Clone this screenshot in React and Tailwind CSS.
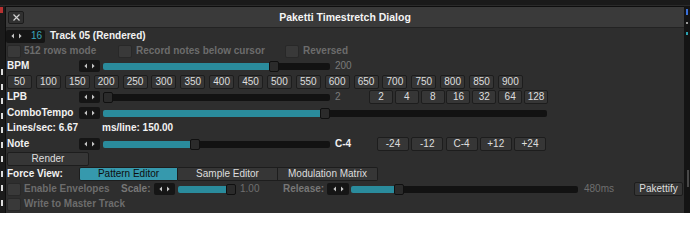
import React from 'react';

const Arrows = () => (
  <svg width="11" height="6" viewBox="0 0 11 6" className="block shrink-0">
    <path d="M3 0.4 L0.4 3 L3 5.6 Z" fill="#c6c6c6" />
    <path d="M8 0.4 L10.6 3 L8 5.6 Z" fill="#c6c6c6" />
  </svg>
);

function ValueBox({ className = 'w-[21px]' }) {
  return (
    <div className={`flex h-[12px] shrink-0 items-center justify-center rounded-[2px] bg-[#151515] ${className}`}>
      <Arrows />
    </div>
  );
}

function Slider({ w, fill }) {
  return (
    <div className={`flex h-[12px] shrink-0 items-center ${w}`}>
      <div className={`h-[7px] shrink-0 rounded-l-[2px] bg-[#2a8b9c] ${fill}`} />
      <div className="h-[11px] w-[10px] shrink-0 rounded-[2px] border border-[#101010] bg-[#2b2b2b]" />
      <div className="h-[7px] flex-1 rounded-r-[2px] bg-[#121212]" />
    </div>
  );
}

function Btn({ children, className = '' }) {
  return (
    <div
      className={`flex h-[14px] shrink-0 items-center justify-center rounded-[2px] border border-[#1d1d1d] bg-[#363636] text-[#dedede] ${className}`}
    >
      {children}
    </div>
  );
}

const Check = () => (
  <div className="h-[13px] w-[14px] shrink-0 rounded-[2px] border border-[#282828] bg-[#393939]" />
);

const bpms = [50, 100, 150, 200, 250, 300, 350, 400, 450, 500, 550, 600, 650, 700, 750, 800, 850, 900];
const lpbs = [2, 4, 8, 16, 32, 64, 128];
const notes = ['-24', '-12', 'C-4', '+12', '+24'];

function LeftStrip() {
  const marks = Array.from({ length: 10 });
  return (
    <div className="flex w-[5px] shrink-0 flex-col overflow-hidden bg-[#1b1b1b]">
      <div className="mt-[1px] h-[6px] w-[3px] shrink-0 bg-[#b83131]" />
      <div className="mt-[56px] flex flex-col gap-[8.5px]">
        {marks.map((_, i) => (
          <div key={i} className="ml-[1px] h-[6px] w-[2px] bg-[#dcdcdc]" />
        ))}
      </div>
    </div>
  );
}

function RightStrip() {
  return (
    <div className="flex w-[6px] shrink-0 flex-col bg-[#141414]">
      <div className="ml-[2px] mt-[3px] h-[6px] w-[2px] bg-[#3a6fd8]" />
      <div className="ml-[2px] mt-[7px] h-[2px] w-[2px] bg-[#9a9a9a]" />
      <div className="ml-[2px] mt-[8px] h-[3px] w-[2px] bg-[#2aa0b0]" />
      <div className="ml-[3px] mt-[135px] h-[17px] w-[2px] bg-[#484848]" />
    </div>
  );
}

export default function App() {
  return (
    <div className="flex h-[213px] w-[690px] flex-col overflow-hidden bg-[#161616] font-['Liberation_Sans',Arial,sans-serif] text-[10px] leading-none">
      <div className="h-[6px] shrink-0 border-b border-[#2a2a2a] bg-[#1a1a1a]" />
      <div className="flex min-h-0 flex-1">
        <LeftStrip />
        <div className="flex w-[679px] shrink-0 flex-col border-l border-t border-[#0e0e0e] bg-[#2e2e2e]">
          {/* Title bar */}
          <div className="flex h-[21px] shrink-0 items-center border-b border-[#232323] bg-[#3a3a3a] px-[2px]">
            <div className="flex h-[13px] w-[16px] items-center justify-center rounded-[2px] border border-[#1c1c1c] bg-[#313131]">
              <svg width="7" height="7" viewBox="0 0 7 7">
                <path d="M0.5 0.5 L6.5 6.5 M6.5 0.5 L0.5 6.5" stroke="#d4d4d4" strokeWidth="1.2" />
              </svg>
            </div>
            <div className="flex-1 text-center text-[10.5px] font-bold text-[#f4f4f4]">Paketti Timestretch Dialog</div>
            <div className="w-[16px]" />
          </div>

          {/* Body */}
          <div className="flex flex-col pl-[1px] pr-[1px]">
            {/* R1 */}
            <div className="mt-[1px] flex h-[14px] items-center">
              <div className="ml-[-1px] flex h-[13px] w-[39px] items-center rounded-[2px] bg-[#151515] pl-[5px]">
                <Arrows />
                <span className="ml-[9px] text-[#3aa7bc]">16</span>
              </div>
              <span className="ml-[5px] font-bold text-[#f2f2f2]">Track 05 (Rendered)</span>
            </div>

            {/* R2 */}
            <div className="mt-[1px] flex h-[14px] items-center font-bold text-[#6c6c6c]">
              <div className="flex w-[111px] items-center">
                <Check />
                <span className="ml-[3px]">512 rows mode</span>
              </div>
              <div className="flex w-[167px] items-center">
                <Check />
                <span className="ml-[4px]">Record notes below cursor</span>
              </div>
              <div className="flex items-center">
                <Check />
                <span className="ml-[4px]">Reversed</span>
              </div>
            </div>

            {/* R3 BPM */}
            <div className="mt-[1px] flex h-[14px] items-center">
              <span className="w-[72px] shrink-0 font-bold text-[#f2f2f2]">BPM</span>
              <ValueBox />
              <div className="ml-[3px]">
                <Slider w="w-[227px]" fill="w-[166px]" />
              </div>
              <span className="ml-[5px] text-[#7a7a7a]">200</span>
            </div>

            {/* R4 BPM buttons */}
            <div className="mt-[2px] flex h-[14px] w-[516px] items-center justify-between">
              {bpms.map((b) => (
                <Btn key={b} className="w-[25px]">
                  {b}
                </Btn>
              ))}
            </div>

            {/* R5 LPB */}
            <div className="mt-[1px] flex h-[14px] items-center">
              <span className="w-[72px] shrink-0 font-bold text-[#f2f2f2]">LPB</span>
              <ValueBox />
              <div className="ml-[3px]">
                <Slider w="w-[227px]" fill="w-0" />
              </div>
              <span className="ml-[5px] w-[34px] shrink-0 text-[#7a7a7a]">2</span>
              <div className="flex w-[179px] items-center justify-between">
                {lpbs.map((l) => (
                  <Btn key={l} className="w-[24px]">
                    {l}
                  </Btn>
                ))}
              </div>
            </div>

            {/* R6 ComboTempo */}
            <div className="mt-[2px] flex h-[14px] items-center">
              <span className="w-[72px] shrink-0 font-bold text-[#f2f2f2]">ComboTempo</span>
              <ValueBox />
              <div className="ml-[3px]">
                <Slider w="w-[444px]" fill="w-[217px]" />
              </div>
            </div>

            {/* R7 Lines/sec */}
            <div className="mt-[1px] flex h-[14px] items-center font-bold text-[#f2f2f2]">
              <span className="w-[95px] shrink-0">Lines/sec: 6.67</span>
              <span>ms/line: 150.00</span>
            </div>

            {/* R8 Note */}
            <div className="mt-[2px] flex h-[14px] items-center">
              <span className="w-[72px] shrink-0 font-bold text-[#f2f2f2]">Note</span>
              <ValueBox />
              <div className="ml-[3px]">
                <Slider w="w-[227px]" fill="w-[87px]" />
              </div>
              <span className="ml-[5px] w-[42px] shrink-0 font-bold text-[#f2f2f2]">C-4</span>
              <div className="flex w-[169px] items-center justify-between">
                {notes.map((n) => (
                  <Btn key={n} className="w-[32px]">
                    {n}
                  </Btn>
                ))}
              </div>
            </div>

            {/* R9 Render */}
            <div className="mt-[1px] flex h-[14px] items-center">
              <Btn className="h-[13px] w-[82px]">Render</Btn>
            </div>

            {/* R10 Force View */}
            <div className="mt-[1px] flex h-[14px] items-center">
              <span className="w-[72px] shrink-0 font-bold text-[#f2f2f2]">Force View:</span>
              <div className="flex h-[14px] items-stretch">
                <div className="flex w-[99px] items-center justify-center rounded-l-[2px] border border-[#1d1d1d] bg-[#3699ad] text-[#0e0e0e]">
                  Pattern Editor
                </div>
                <div className="flex w-[100px] items-center justify-center border-y border-r border-[#1d1d1d] bg-[#363636] text-[#dedede]">
                  Sample Editor
                </div>
                <div className="flex w-[100px] items-center justify-center rounded-r-[2px] border-y border-r border-[#1d1d1d] bg-[#363636] text-[#dedede]">
                  Modulation Matrix
                </div>
              </div>
            </div>

            {/* R11 Envelopes */}
            <div className="mt-[1px] flex h-[14px] items-center">
              <div className="flex w-[114px] shrink-0 items-center font-bold text-[#6c6c6c]">
                <Check />
                <span className="ml-[3px]">Enable Envelopes</span>
              </div>
              <span className="w-[33px] shrink-0 font-bold text-[#777777]">Scale:</span>
              <ValueBox />
              <div className="ml-[3px]">
                <Slider w="w-[58px]" fill="w-[48px]" />
              </div>
              <span className="ml-[4px] w-[43px] shrink-0 text-[#6f6f6f]">1.00</span>
              <span className="w-[44px] shrink-0 font-bold text-[#777777]">Release:</span>
              <ValueBox className="w-[22px]" />
              <div className="ml-[2px]">
                <Slider w="w-[227px]" fill="w-[43px]" />
              </div>
              <span className="ml-[6px] text-[#6f6f6f]">480ms</span>
              <div className="flex-1" />
              <Btn className="h-[14px] w-[49px]">Pakettify</Btn>
            </div>

            {/* R12 */}
            <div className="mt-[1px] flex h-[14px] items-center font-bold text-[#6c6c6c]">
              <Check />
              <span className="ml-[3px]">Write to Master Track</span>
            </div>
          </div>
        </div>
        <RightStrip />
      </div>
    </div>
  );
}
